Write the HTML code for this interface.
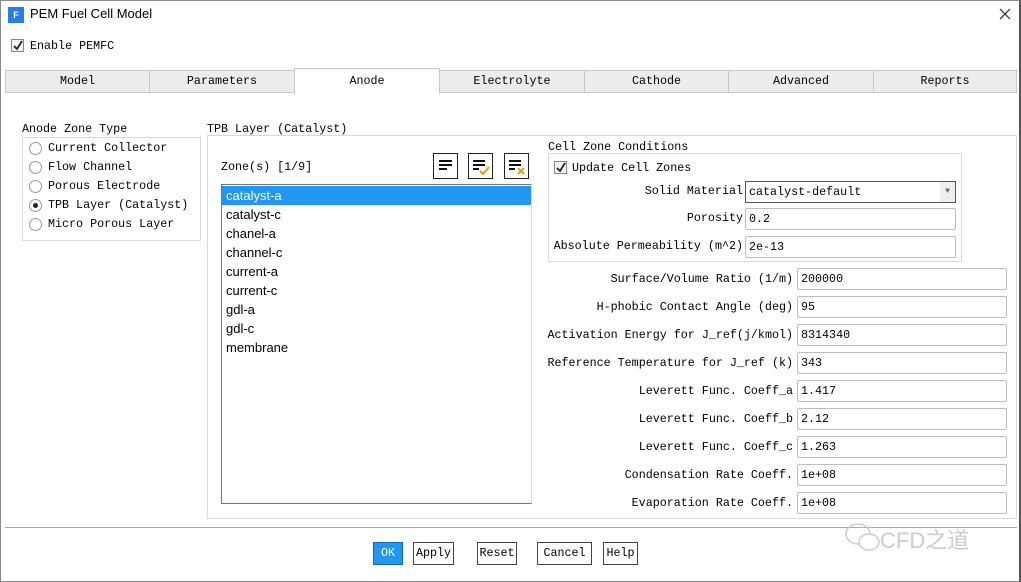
<!DOCTYPE html><html><head><style>
*{box-sizing:border-box;margin:0;padding:0}
body{width:1021px;height:582px;background:#fff;position:relative;overflow:hidden;font-family:"Liberation Mono",monospace;font-size:11.7px;color:#000}
.a{position:absolute;white-space:nowrap}
.tab{position:absolute;top:70px;height:23px;background:#ececec;border:1px solid #c8c8c8;text-align:center;line-height:21px}
.gb{position:absolute;border:1px solid #d4dae4}
.rad{position:absolute;width:13px;height:13px;border:1px solid #9a9a9a;border-radius:50%;background:#fff}
.fld{position:absolute;height:22px;border:1px solid #bdbdbd;border-radius:2px;padding-left:3px;line-height:20px;background:#fff}
.lbl{position:absolute;text-align:right;line-height:22px}
.cb{position:absolute;width:13px;height:13px;border:1px solid #888;background:#f4f4f4}
.btn{position:absolute;top:542px;height:23px;border:1px solid #444;background:#fff;text-align:center;line-height:21px}
.li{position:absolute;left:226px;font-family:"Liberation Sans",sans-serif;font-size:13px}
.ib{position:absolute;top:153px;width:25px;height:26px;border:1px solid #222;background:#fff}
</style></head><body>
<div class="a" style="left:0;top:0;width:1021px;height:582px;border:1px solid #888;border-right:2px solid #555"></div>
<div class="a" style="left:8px;top:7px;width:16px;height:16px;background:#2a7de1;color:#fff;font:bold 9px 'Liberation Sans',sans-serif;text-align:center;line-height:16px">F</div>
<div class="a" style="left:30px;top:6px;font:13px 'Liberation Sans',sans-serif">PEM Fuel Cell Model</div>
<svg class="a" style="left:999px;top:8px" width="12" height="12"><path d="M1 1L11 11M11 1L1 11" stroke="#222" stroke-width="1.2"/></svg>
<div class="cb" style="left:11px;top:39px"><svg width="11" height="11" style="position:absolute;left:0;top:0"><path d="M2 6l3 3 5-8" stroke="#222" stroke-width="1.8" fill="none"/></svg></div>
<div class="a" style="left:30px;top:39px">Enable PEMFC</div>
<div class="a" style="left:5px;top:92px;width:1012px;height:1px;background:#c8c8c8"></div>
<div class="tab" style="left:5px;width:145px">Model</div>
<div class="tab" style="left:149px;width:146px">Parameters</div>
<div class="tab" style="left:439px;width:146px">Electrolyte</div>
<div class="tab" style="left:584px;width:145px">Cathode</div>
<div class="tab" style="left:728px;width:146px">Advanced</div>
<div class="tab" style="left:873px;width:144px">Reports</div>
<div class="tab" style="left:294px;top:68px;width:146px;height:26px;background:#fff;border-bottom:none;line-height:24px">Anode</div>
<div class="a" style="left:22px;top:122px">Anode Zone Type</div>
<div class="gb" style="left:22px;top:137px;width:179px;height:104px"></div>
<div class="rad" style="left:29px;top:142px"></div><div class="a" style="left:48px;top:141px">Current Collector</div>
<div class="rad" style="left:29px;top:161px"></div><div class="a" style="left:48px;top:160px">Flow Channel</div>
<div class="rad" style="left:29px;top:180px"></div><div class="a" style="left:48px;top:179px">Porous Electrode</div>
<div class="rad" style="left:29px;top:199px"></div><div class="a" style="left:33px;top:203px;width:5px;height:5px;border-radius:50%;background:#222"></div><div class="a" style="left:48px;top:198px">TPB Layer (Catalyst)</div>
<div class="rad" style="left:29px;top:218px"></div><div class="a" style="left:48px;top:217px">Micro Porous Layer</div>
<div class="a" style="left:207px;top:122px">TPB Layer (Catalyst)</div>
<div class="gb" style="left:207px;top:135px;width:810px;height:384px"></div>
<div class="a" style="left:221px;top:160px">Zone(s) [1/9]</div>
<div class="ib" style="left:433px"><svg width="23" height="24"><path d="M5 7h13M5 11h13M5 15h8" stroke="#111" stroke-width="2"/></svg></div>
<div class="ib" style="left:468px"><svg width="23" height="24"><path d="M4 7h12M4 11h12M4 15h6" stroke="#111" stroke-width="2"/><path d="M11 17l3 3 6-7" stroke="#d9a21c" stroke-width="2" fill="none"/></svg></div>
<div class="ib" style="left:504px"><svg width="23" height="24"><path d="M4 7h12M4 11h12M4 15h6" stroke="#111" stroke-width="2"/><path d="M13 14l6 6M19 14l-6 6" stroke="#d9a21c" stroke-width="2"/></svg></div>
<div class="a" style="left:221px;top:184px;width:311px;height:320px;border:1px solid #777;border-right-color:#ddd"></div>
<div class="a" style="left:222px;top:186px;width:309px;height:19px;background:#2196f3"></div>
<div class="li" style="top:188px;color:#fff">catalyst-a</div>
<div class="li" style="top:207px">catalyst-c</div>
<div class="li" style="top:226px">chanel-a</div>
<div class="li" style="top:245px">channel-c</div>
<div class="li" style="top:264px">current-a</div>
<div class="li" style="top:283px">current-c</div>
<div class="li" style="top:302px">gdl-a</div>
<div class="li" style="top:321px">gdl-c</div>
<div class="li" style="top:340px">membrane</div>
<div class="a" style="left:548px;top:140px">Cell Zone Conditions</div>
<div class="gb" style="left:548px;top:153px;width:414px;height:109px"></div>
<div class="cb" style="left:554px;top:161px"><svg width="11" height="11" style="position:absolute;left:0;top:0"><path d="M2 6l3 3 5-8" stroke="#222" stroke-width="1.8" fill="none"/></svg></div>
<div class="a" style="left:572px;top:161px">Update Cell Zones</div>
<div class="lbl" style="left:550px;width:193px;top:180px">Solid Material</div>
<div class="fld" style="left:745px;top:181px;width:211px;border-color:#555;border-radius:0">catalyst-default<span style="position:absolute;right:0;top:0;width:15px;height:20px;background:#eee;font-size:8px;color:#666;text-align:center">▼</span></div>
<div class="lbl" style="left:550px;width:193px;top:207px">Porosity</div>
<div class="fld" style="left:745px;top:208px;width:211px">0.2</div>
<div class="lbl" style="left:550px;width:193px;top:235px">Absolute Permeability (m^2)</div>
<div class="fld" style="left:745px;top:236px;width:211px">2e-13</div>
<div class="lbl" style="left:540px;width:253px;top:268px">Surface/Volume Ratio (1/m)</div><div class="fld" style="left:797px;top:268px;width:210px">200000</div>
<div class="lbl" style="left:540px;width:253px;top:296px">H-phobic Contact Angle (deg)</div><div class="fld" style="left:797px;top:296px;width:210px">95</div>
<div class="lbl" style="left:540px;width:253px;top:324px">Activation Energy for J_ref(j/kmol)</div><div class="fld" style="left:797px;top:324px;width:210px">8314340</div>
<div class="lbl" style="left:540px;width:253px;top:352px">Reference Temperature for J_ref (k)</div><div class="fld" style="left:797px;top:352px;width:210px">343</div>
<div class="lbl" style="left:540px;width:253px;top:380px">Leverett Func. Coeff_a</div><div class="fld" style="left:797px;top:380px;width:210px">1.417</div>
<div class="lbl" style="left:540px;width:253px;top:408px">Leverett Func. Coeff_b</div><div class="fld" style="left:797px;top:408px;width:210px">2.12</div>
<div class="lbl" style="left:540px;width:253px;top:436px">Leverett Func. Coeff_c</div><div class="fld" style="left:797px;top:436px;width:210px">1.263</div>
<div class="lbl" style="left:540px;width:253px;top:464px">Condensation Rate Coeff.</div><div class="fld" style="left:797px;top:464px;width:210px">1e+08</div>
<div class="lbl" style="left:540px;width:253px;top:492px">Evaporation Rate Coeff.</div><div class="fld" style="left:797px;top:492px;width:210px">1e+08</div>
<div class="a" style="left:5px;top:527px;width:1012px;height:1px;background:#aaa"></div>
<div class="btn" style="left:373px;width:30px;background:#2196f3;color:#fff;border-color:#1565c0">OK</div>
<div class="btn" style="left:413px;width:41px">Apply</div>
<div class="btn" style="left:477px;width:40px">Reset</div>
<div class="btn" style="left:537px;width:55px">Cancel</div>
<div class="btn" style="left:603px;width:35px">Help</div>
<svg class="a" style="left:843px;top:520px" width="40" height="34"><ellipse cx="15" cy="14" rx="12" ry="10" fill="none" stroke="#ccc" stroke-width="1.5"/><ellipse cx="26" cy="22" rx="10" ry="8" fill="#fff" stroke="#ccc" stroke-width="1.5"/></svg>
<div class="a" style="left:880px;top:523px;font:22px 'Liberation Sans','Noto Sans CJK SC',sans-serif;color:#ccc">CFD之道</div>
</body></html>
